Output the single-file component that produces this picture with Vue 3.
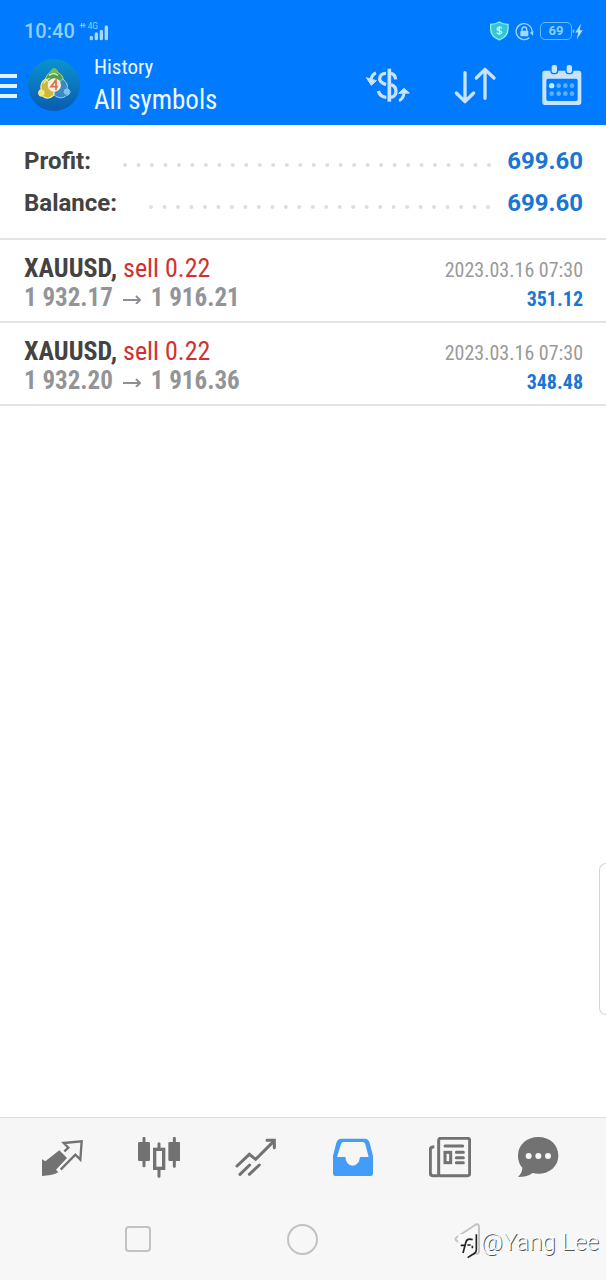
<script setup>
const summary = [
  { label: 'Profit:', value: '699.60' },
  { label: 'Balance:', value: '699.60' },
]

const deals = [
  { id: 1, symbol: 'XAUUSD,', action: 'sell 0.22', open: '1 932.17', close: '1 916.21', time: '2023.03.16 07:30', profit: '351.12' },
  { id: 2, symbol: 'XAUUSD,', action: 'sell 0.22', open: '1 932.20', close: '1 916.36', time: '2023.03.16 07:30', profit: '348.48' },
]
</script>

<template>
  <div class="screen">
    <header class="top">
      <div class="status">
        <span class="clock">10:40</span>
        <svg class="signal" viewBox="238 62 93 57" aria-hidden="true">
          <path d="M240 72h18M246 65v14M253 65v14" stroke="#8cc8ff" stroke-width="3" />
          <text class="network" x="264" y="84">4G</text>
          <path d="M275 108v4M290 98v14M305 90v22M320 77v35" stroke="#a6d8ff" stroke-width="10" stroke-linecap="round" />
        </svg>
        <span class="spacer"></span>
        <svg class="shield" viewBox="450 62 57 60" aria-hidden="true">
          <path d="M478 65c8 5 17 7 26 7v14c0 15-9 26-26 33-17-7-26-18-26-33V72c9 0 18-2 26-7z" fill="#35c4d8" stroke="#8cf0ee" stroke-width="4" />
          <path d="M485 84c-3-5-14-4-14 2 0 7 14 3 14 10 0 6-12 6-15 1M478 77v27" fill="none" stroke="#b9fbff" stroke-width="4" />
        </svg>
        <svg class="lock" viewBox="525 65 57 57" aria-hidden="true">
          <path d="M568 112a24 24 0 1 1 8-14" fill="none" stroke="#a6d8ff" stroke-width="4" />
          <path d="M570 97l10-5 -1 14z" fill="#a6d8ff" />
          <rect x="541" y="91" width="24" height="17" rx="3" fill="#a6d8ff" />
          <path d="M546 92v-5a7 7 0 0 1 14 0v5" fill="none" stroke="#a6d8ff" stroke-width="4" />
        </svg>
        <span class="battery">69</span>
        <svg class="bolt" viewBox="696 68 36 50" aria-hidden="true">
          <rect x="698" y="87" width="5" height="10" fill="#6dbcff" />
          <path d="M723 69l-17 27h9l-5 21 18-28h-9z" fill="#b5deff" />
        </svg>
      </div>

      <div class="toolbar">
        <button class="menu" type="button" aria-label="Menu"><i></i><i></i><i></i></button>
        <svg class="logo" viewBox="83 176 156 156" aria-hidden="true">
          <defs>
            <linearGradient id="disc" x1="0" y1="0" x2="0" y2="1">
              <stop offset="0" stop-color="#0a93cf" />
              <stop offset="1" stop-color="#0a5bb0" />
            </linearGradient>
          </defs>
          <circle cx="161" cy="254" r="78" fill="url(#disc)" />
          <path d="M134 245c0-13 7-25 17-29 1-13 20-13 21 0 11 4 18 15 18 29z" fill="#4f9f56" stroke="#a3d77d" stroke-width="3" />
          <path d="M136 236c-13 7-16 21-13 32-12 5-9 20 4 19 10 9 23 7 34-3l-2-26z" fill="#d0b840" stroke="#f5ec96" stroke-width="4" />
          <path d="M187 236c13 9 16 20 13 29 13 3 11 19-1 20-10 11-28 9-37-1l4-28z" fill="#3a88c4" stroke="#a0d4ea" stroke-width="3" />
          <circle cx="161" cy="213" r="9" fill="#6fbd5e" />
          <circle cx="124" cy="277" r="9" fill="#f3e873" />
          <circle cx="199" cy="274" r="9" fill="#7fc2ea" />
          <path d="M130 250q8-14 18-16M146 225q14-10 27 0" fill="none" stroke="#e7f0a0" stroke-width="4" />
          <circle cx="162" cy="254" r="20" fill="#fbeede" />
          <path d="M167 270v-31l-15 20h21" fill="none" stroke="#db7048" stroke-width="5" />
        </svg>
        <div class="titles">
          <div class="title">History</div>
          <h1 class="subtitle">All symbols</h1>
        </div>
        <button class="tool" type="button" aria-label="Currency">
          <svg viewBox="72 186 144 132" fill="none" stroke="#c9e3ff" stroke-width="10">
            <path d="M148 203v99" stroke-width="11" />
            <path d="M138 217c-13 0-19 8-19 17 0 8 6 12 19 17M153 217c8 2 13 8 14 18M153 251c20 6 20 34 0 38M139 289c-13-1-20-6-24-19" />
            <path d="M108 216c-9 3-13 9-15 20M177 299c9-3 13-10 15-22" stroke-width="9" />
            <path d="M79 230l15 23 15-14zM176 277l16-15 16 14z" fill="#c9e3ff" stroke-width="3" stroke-linejoin="round" />
          </svg>
        </button>
        <button class="tool" type="button" aria-label="Sort">
          <svg viewBox="333 186 144 132" fill="none" stroke="#c9e3ff" stroke-width="10" stroke-linecap="round" stroke-linejoin="round">
            <path d="M375 215v86M349 276l26 26 26-26M435 292v-87M409 231l26-26 27 26" />
          </svg>
        </button>
        <button class="tool" type="button" aria-label="Select period">
          <svg viewBox="596 186 144 132">
            <path fill="#c9e3ff" fill-rule="evenodd" d="M617 209h101q8 0 8 8v87q0 8-8 8H617q-8 0-8-8v-87q0-8 8-8zM626 233q-5 0-5 5v57q0 5 5 5h84q5 0 5-5v-57q0-5-5-5z" />
            <rect x="635" y="190" width="20" height="28" rx="8" fill="#c9e3ff" stroke="#007aff" stroke-width="4" />
            <rect x="680" y="190" width="20" height="28" rx="8" fill="#c9e3ff" stroke="#007aff" stroke-width="4" />
            <circle cx="637" cy="254" r="8" fill="#b4f0ff" />
            <g fill="#5fb0ff">
              <circle cx="658" cy="254" r="7" /><circle cx="678" cy="254" r="7" /><circle cx="698" cy="254" r="7" />
              <circle cx="637" cy="278" r="7" /><circle cx="658" cy="278" r="7" /><circle cx="678" cy="278" r="7" /><circle cx="698" cy="278" r="7" />
            </g>
          </svg>
        </button>
      </div>
    </header>

    <main class="content">
      <dl class="summary">
        <div v-for="row in summary" :key="row.label" class="total">
          <dt>{{ row.label }}</dt>
          <svg class="leader" aria-hidden="true">
            <line x1="2" y1="10" x2="100%" y2="10" stroke="#dedede" stroke-width="4" stroke-linecap="round" stroke-dasharray="0 13.48" />
          </svg>
          <dd>{{ row.value }}</dd>
        </div>
      </dl>

      <ul class="deals">
        <li v-for="deal in deals" :key="deal.id" class="deal">
          <div class="line">
            <span><b>{{ deal.symbol }}</b> <span class="sell">{{ deal.action }}</span></span>
            <time class="time">{{ deal.time }}</time>
          </div>
          <div class="line">
            <span class="prices">
              <span>{{ deal.open }}</span>
              <svg class="arrow" viewBox="0 0 20 12" fill="none" stroke="#8e9095" stroke-width="2"><path d="M1 8h17M14 4l4 4-4 4" /></svg>
              <span>{{ deal.close }}</span>
            </span>
            <span class="gain">{{ deal.profit }}</span>
          </div>
        </li>
      </ul>
      <div class="edge-panel"></div>
    </main>

    <footer class="bottom">
      <nav class="tabs">
        <button type="button" aria-label="Quotes">
          <svg viewBox="123 111 126 126" fill="#727272">
            <path d="M178 151l23 23-33 35 7 8c-15 8-30 10-49 11v-50l10 6z" />
            <path d="M182 209l44-45 15 15 4-55-54 5 14 14-12 11" fill="none" stroke="#727272" stroke-width="7" />
          </svg>
        </button>
        <button type="button" aria-label="Charts">
          <svg viewBox="414 111 126 126" fill="none" stroke="#727272">
            <path d="M432 115v82M523 115v84M477 131v14M477 208v21" stroke-width="9" stroke-linecap="round" />
            <rect x="414" y="126" width="36" height="57" rx="4" fill="#727272" stroke="none" />
            <rect x="505" y="126" width="36" height="57" rx="4" fill="#727272" stroke="none" />
            <rect x="464" y="148" width="27" height="57" stroke-width="10" />
          </svg>
        </button>
        <button type="button" aria-label="Trade">
          <svg viewBox="705 111 126 126" fill="none" stroke="#727272" stroke-width="9" stroke-linecap="round">
            <path d="M711 198l37-35 19 15 54-54M801 121h22v22M720 223l29-28M748 223l30-28" />
          </svg>
        </button>
        <button type="button" aria-label="History" aria-current="page">
          <svg viewBox="87 111 126 126">
            <path fill="#439df8" fill-rule="evenodd" d="M115 116h70q11 0 15 12l10 40v53q0 7-7 7H97q-7 0-7-7v-53l10-40q4-12 15-12zM121 126q-5 0-7 6l-12 39h25q3 26 22 26t22-26h26l-10-38q-2-7-8-7z" />
          </svg>
        </button>
        <button type="button" aria-label="News">
          <svg viewBox="378 111 126 126" fill="none" stroke="#727272" stroke-width="9">
            <path d="M407 227h-17q-8 0-8-8v-70q0-9 12-9" />
            <rect x="407" y="115" width="93" height="112" rx="6" />
            <path d="M426 138h53M460 157h21M460 173h21M460 188h21" stroke-linecap="round" />
            <rect x="426" y="157" width="17" height="31" />
          </svg>
        </button>
        <button type="button" aria-label="Messages">
          <svg viewBox="642 111 126 126">
            <path fill="#727272" d="M706 111c35 0 60 24 60 56 0 37-36 61-77 52-13 9-27 12-44 12 8-8 13-17 13-28-9-10-13-22-13-36 0-32 26-56 61-56z" />
            <circle cx="677" cy="168" r="9" fill="#f6f6f6" /><circle cx="706" cy="168" r="9" fill="#f6f6f6" /><circle cx="735" cy="168" r="9" fill="#f6f6f6" />
          </svg>
        </button>
      </nav>
      <div class="system">
        <button type="button" aria-label="Recent apps"><i class="square"></i></button>
        <button type="button" aria-label="Home"><i class="round"></i></button>
        <button type="button" aria-label="Back">
          <svg class="back" viewBox="0 0 30 32" fill="none" stroke="#c4c4c4" stroke-width="2"><path d="M26 4v24q0 4-4 2L4 18q-3-2 0-4L22 2q4-2 4 2z" /></svg>
        </button>
      </div>
      <div class="credit">
        <svg viewBox="30 22 72 102" aria-hidden="true">
          <path d="M34 50l20-1q14-3 20-11l16-3v66l-30 12-26-10z" fill="#fafafa" />
          <path d="M88 50v46q0 10-14 16l-12 8" fill="none" stroke="#222" stroke-width="5" />
          <path d="M77 66q-16-5-20 6l-9 34M41 83h12M61 82h10M76 84v8" fill="none" stroke="#222" stroke-width="5" />
        </svg>
        <span>@Yang Lee</span>
      </div>
    </footer>
  </div>
</template>

<style>
body {
  margin: 0;
}
</style>

<style scoped>
.screen {
  display: flex;
  flex-direction: column;
  min-height: 100vh;
  background: #fff;
  color: #434343;
  font-family: "Roboto Condensed", "Liberation Sans Narrow", Roboto, sans-serif;
}
button {
  display: flex;
  align-items: center;
  justify-content: center;
  margin: 0;
  padding: 0;
  border: 0;
  background: none;
  color: inherit;
}
svg {
  display: block;
  flex: none;
}
.top {
  background: #007aff;
  padding-bottom: 6px;
}
.status {
  display: flex;
  align-items: center;
  height: 40px;
  padding: 11px 22px 0 24px;
  color: #8fd0ff;
  font-family: Roboto, sans-serif;
}
.clock {
  font-size: 20px;
  font-weight: 500;
}
.signal {
  width: 31px;
  height: 19px;
  margin-left: 4px;
}
.network {
  fill: #8cd0ff;
  font-size: 25px;
}
.spacer {
  flex: 1;
}
.shield {
  width: 19px;
  height: 20px;
  margin-right: 6px;
}
.lock {
  width: 19px;
  height: 19px;
  margin-right: 6px;
}
.battery {
  box-sizing: border-box;
  width: 32px;
  height: 18px;
  border: 1px solid #66bcff;
  border-radius: 5px;
  font-size: 13px;
  font-weight: 700;
  line-height: 16px;
  text-align: center;
}
.bolt {
  width: 12px;
  height: 17px;
}
.toolbar {
  display: flex;
  align-items: center;
  padding-right: 20px;
  color: #eef7ff;
}
.menu {
  flex-direction: column;
  gap: 6px;
  width: 17px;
  margin-right: 11px;
  padding-top: 2px;
}
.menu i {
  width: 100%;
  height: 4px;
  background: #e3f2ff;
}
.logo {
  width: 52px;
  height: 52px;
  margin-right: 14px;
}
.titles {
  flex: 1;
  padding-bottom: 2px;
  white-space: nowrap;
}
.title {
  font-size: 21px;
  line-height: 33px;
}
.subtitle {
  margin: 0;
  font-size: 27px;
  font-weight: 400;
  line-height: 33px;
}
.tool + .tool {
  margin-left: 39px;
}
.tool svg {
  width: 48px;
  height: 44px;
}
.content {
  position: relative;
  flex: 1;
}
.summary {
  margin: 0;
  padding: 15px 23px 14px 24px;
  border-bottom: 2px solid #e4e4e4;
  font-family: Roboto, sans-serif;
  font-size: 24px;
  font-weight: 700;
  line-height: 42px;
}
.total {
  display: flex;
  align-items: center;
}
.total dd {
  margin: 0;
  color: #1976d2;
}
.leader {
  flex: 1;
  min-width: 0;
  height: 12px;
  margin: 0 16px 0 32px;
}
.deals {
  margin: 0;
  padding: 0;
  list-style: none;
}
.deal {
  padding: 14px 23px 9px 24px;
  border-bottom: 2px solid #e4e4e4;
}
.line {
  display: flex;
  align-items: baseline;
  justify-content: space-between;
  height: 29px;
  font-size: 26px;
  line-height: 29px;
  white-space: nowrap;
}
.sell {
  color: #d32f2f;
}
.prices {
  display: flex;
  align-items: center;
  gap: 9px;
  color: #929498;
  font-size: 25px;
  font-weight: 700;
}
.arrow {
  width: 20px;
  height: 12px;
}
.time {
  color: #9a9a9a;
  font-size: 20px;
}
.gain {
  color: #1976d2;
  font-size: 20px;
  font-weight: 700;
}
.edge-panel {
  position: absolute;
  right: 0;
  bottom: 102px;
  width: 7px;
  height: 152px;
  box-sizing: border-box;
  border: 1px solid #d4d4d4;
  border-right: 0;
  border-radius: 7px 0 0 7px;
}
.bottom {
  position: relative;
  border-top: 1px solid #dedede;
  background: #f7f7f7;
}
.tabs {
  display: grid;
  grid-template-columns: repeat(5, 97fr) 78fr;
  padding: 19px 29px 21px 13px;
  background: #f6f6f6;
}
.tabs svg {
  width: 42px;
  height: 42px;
}
.system {
  display: grid;
  grid-template-columns: repeat(3, 1fr);
  height: 78px;
  padding: 0 55px 2px;
}
.square {
  box-sizing: border-box;
  width: 26px;
  height: 26px;
  border: 2px solid #c2c2c2;
  border-radius: 4px;
}
.round {
  box-sizing: border-box;
  width: 31px;
  height: 31px;
  border: 2px solid #c2c2c2;
  border-radius: 50%;
}
.back {
  width: 30px;
  height: 32px;
}
.credit {
  position: absolute;
  right: 7px;
  bottom: 21px;
  display: flex;
  align-items: center;
  color: #fff;
  font-family: Roboto, sans-serif;
  font-size: 24px;
  font-weight: 300;
  line-height: 34px;
  text-shadow: 1px 1px 0 #555;
}
.credit svg {
  width: 24px;
  height: 34px;
}
</style>
